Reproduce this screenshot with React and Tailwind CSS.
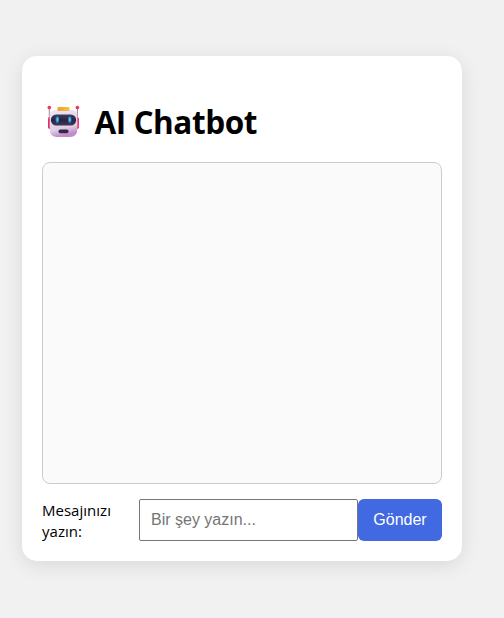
function Robot() {
  return (
    <svg viewBox="0 0 36 34" className="ml-[4px] mt-[1px] h-[34px] w-[36px] shrink-0" aria-hidden="true">
      <defs>
        <linearGradient id="face" x1="0" y1="0" x2="0.25" y2="1">
          <stop offset="0" stopColor="#eee7f4" />
          <stop offset="0.75" stopColor="#dccfe8" />
          <stop offset="1" stopColor="#c08cc9" />
        </linearGradient>
        <linearGradient id="visor" x1="0" y1="0" x2="0" y2="1">
          <stop offset="0" stopColor="#493a5c" />
          <stop offset="0.5" stopColor="#252544" />
          <stop offset="1" stopColor="#493654" />
        </linearGradient>
        <linearGradient id="cap" x1="0" y1="0" x2="1" y2="0">
          <stop offset="0" stopColor="#ee9e32" />
          <stop offset="1" stopColor="#f8c449" />
        </linearGradient>
      </defs>
      <path d="M3.3 4V14M31.4 4V14" stroke="#a4868f" strokeWidth="1" />
      <circle cx="3.3" cy="3.6" r="1.8" fill="#f5315f" />
      <circle cx="31.4" cy="3.6" r="1.8" fill="#f5315f" />
      <rect x="2" y="13" width="4" height="12" rx="1.8" fill="#e02f66" />
      <rect x="29" y="13" width="4" height="12" rx="1.8" fill="#f6387b" />
      <path d="M9.5 6H25.5Q31.3 6 31.3 12V25Q31.3 33 24 33H11Q3.7 33 3.7 25V12Q3.7 6 9.5 6Z" fill="url(#face)" />
      <rect x="11.5" y="3" width="12" height="4" rx="1.2" fill="url(#cap)" />
      <rect x="4.9" y="10.4" width="25.2" height="11" rx="5.2" fill="url(#visor)" />
      <ellipse cx="11.3" cy="15.7" rx="1.7" ry="3.1" fill="#2788cf" />
      <ellipse cx="23.7" cy="15.7" rx="1.7" ry="3.1" fill="#2788cf" />
      <ellipse cx="11.5" cy="15.5" rx="0.8" ry="2.1" fill="#59c5f6" />
      <ellipse cx="23.9" cy="15.5" rx="0.8" ry="2.1" fill="#59c5f6" />
      <rect x="12.5" y="25.4" width="10" height="3.8" rx="1.7" fill="#37254a" />
    </svg>
  );
}

export default function App() {
  return (
    <main className="h-[618px] w-[504px] overflow-hidden bg-[#f1f1f1] pl-[22px] pt-[56px] font-['Open_Sans','Noto_Sans',sans-serif] text-black">
      <section className="flex h-[505px] w-[440px] flex-col rounded-[15px] bg-white px-5 pt-[47px] shadow-[0_4px_20px_rgba(0,0,0,0.1)]">
        <header className="flex h-[59px] items-start">
          <Robot />
          <h1 className="ml-[12.5px] whitespace-nowrap text-[31.5px] font-bold leading-[37px] tracking-[-0.45px]">
            AI Chatbot
          </h1>
        </header>
        <div className="h-[322px] w-full rounded-[8px] border border-[#ccc] bg-[#fafafa]" />
        <form className="mt-[15px] flex h-[42px] items-center" onSubmit={(e) => e.preventDefault()}>
          <label htmlFor="message" className="mt-[2px] w-[97px] text-[15px] leading-[21px] tracking-[0.02px]">
            Mesajınızı
            <br />
            yazın:
          </label>
          <input
            id="message"
            placeholder="Bir şey yazın..."
            className="h-[42px] w-[219px] rounded-[2px] border border-[#767676] bg-white px-[11px] font-['Liberation_Sans',sans-serif] text-base placeholder:text-[#757575]"
          />
          <button className="h-[42px] w-[84px] rounded-[6px] bg-[#4169e1] font-['Liberation_Sans',sans-serif] text-base text-white">
            Gönder
          </button>
        </form>
      </section>
    </main>
  );
}
